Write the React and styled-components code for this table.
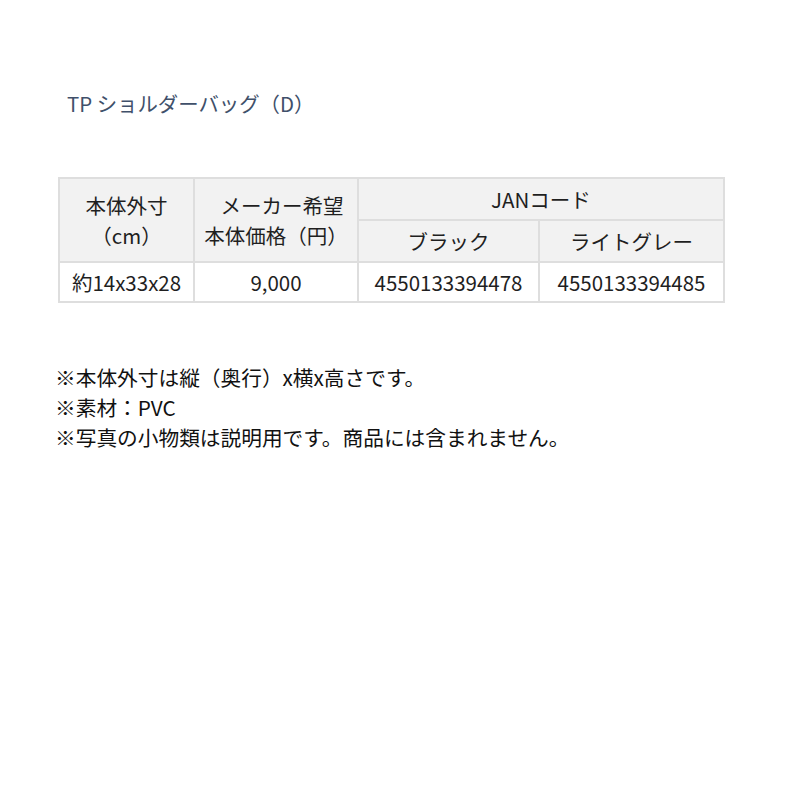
import React from "react";
import styled, { createGlobalStyle } from "styled-components";

const Global = createGlobalStyle`
  html, body { margin: 0; padding: 0; background: #fff; }
  body { font-family: "Noto Sans CJK JP", "Noto Sans", sans-serif; color: #333; }
`;

const Page = styled.div`
  width: 800px;
  height: 800px;
  box-sizing: border-box;
  padding-top: 88px;
`;

const Title = styled.h1`
  margin: 0 0 0 67px;
  font-size: 20.4px;
  font-weight: 400;
  line-height: 30px;
  color: #40506a;
`;

const Table = styled.table`
  margin: 59px 0 0 58px;
  border-collapse: collapse;
  font-size: 20.5px;
  color: #1f1f1f;
  table-layout: fixed;
`;

const Col = styled.col`
  width: ${(p) => p.$w}px;
`;

const cellBase = `
  border: 2px solid #dedede;
  text-align: center;
  padding: 0;
  line-height: 30px;
  box-sizing: border-box;
  white-space: nowrap;
`;

const HeadCell = styled.th`
  ${cellBase}
  font-weight: 400;
  background: #f2f2f2;
  height: ${(p) => p.$h || 42}px;
`;

const Cell = styled.td`
  ${cellBase}
  background: #fff;
  height: 40px;
`;

const Indent = styled.span`
  padding-left: 12px;
`;

const Notes = styled.div`
  margin: 59px 0 0 55px;
  font-size: 20.7px;
  line-height: 30px;
  color: #111;
`;

const Note = styled.p`
  margin: 0;
`;

export default function App() {
  return (
    <>
      <Global />
      <Page>
        <Title>TP ショルダーバッグ（D）</Title>
        <Table>
          <colgroup>
            <Col $w={135} />
            <Col $w={164} />
            <Col $w={181} />
            <Col $w={185} />
          </colgroup>
          <tbody>
            <tr>
              <HeadCell rowSpan={2}>
                本体外寸<br />（cm）
              </HeadCell>
              <HeadCell rowSpan={2}>
                <Indent>メーカー希望</Indent><br />本体価格（円）
              </HeadCell>
              <HeadCell colSpan={2}>JANコード</HeadCell>
            </tr>
            <tr>
              <HeadCell>ブラック</HeadCell>
              <HeadCell>ライトグレー</HeadCell>
            </tr>
            <tr>
              <Cell>約14x33x28</Cell>
              <Cell>9,000</Cell>
              <Cell>4550133394478</Cell>
              <Cell>4550133394485</Cell>
            </tr>
          </tbody>
        </Table>
        <Notes>
          <Note>※本体外寸は縦（奥行）x横x高さです。</Note>
          <Note>※素材：PVC</Note>
          <Note>※写真の小物類は説明用です。商品には含まれません。</Note>
        </Notes>
      </Page>
    </>
  );
}
